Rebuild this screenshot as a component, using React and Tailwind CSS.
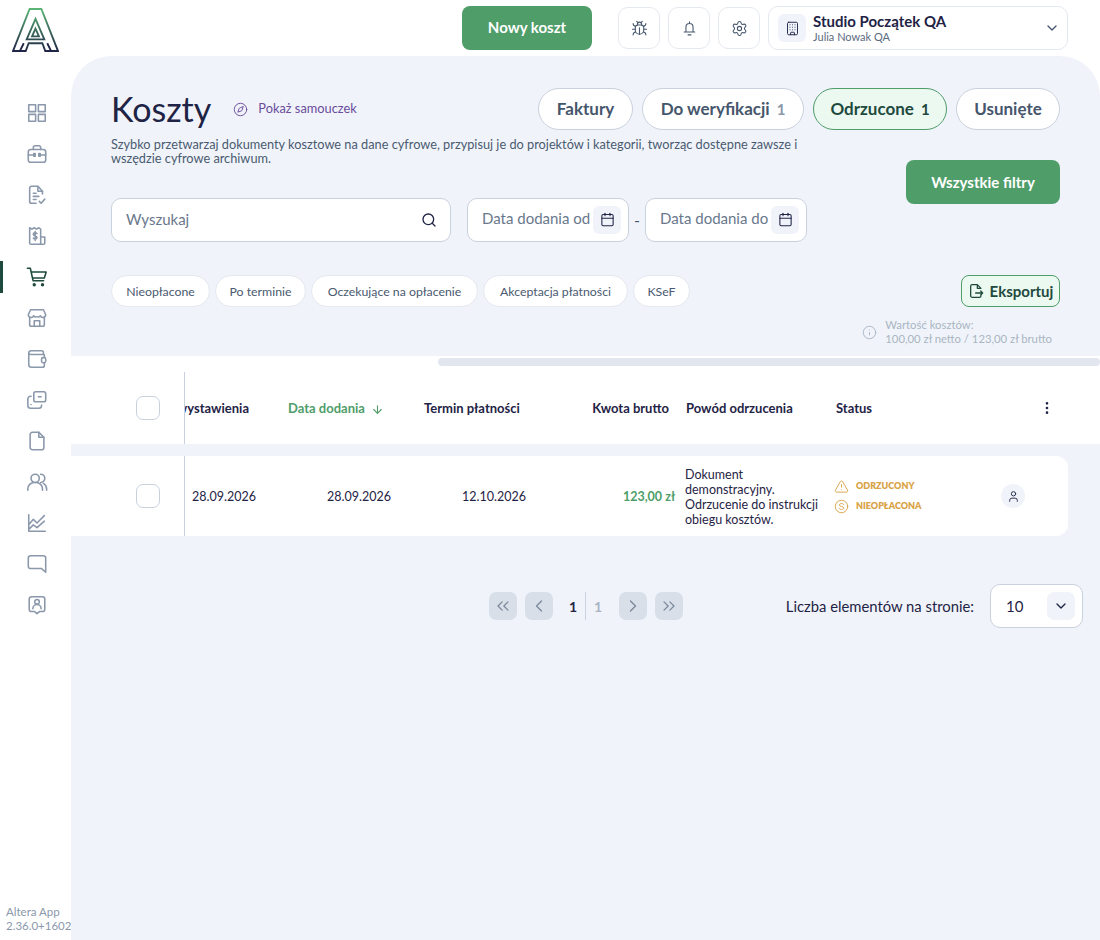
import React from 'react';
import {
  ArrowDown, Building, Bug, Calendar, ChevronDown, ChevronLeft, ChevronRight, ChevronsLeft, ChevronsRight,
  Compass, EllipsisVertical, Info, Search, Settings, TriangleAlert, User,
} from 'lucide-react';

const FONT = "font-['Lato','Noto_Sans',sans-serif]";

const Logo = () => (
  <svg width="47" height="45" viewBox="0 0 48 46" fill="none" strokeWidth="1.900" strokeLinejoin="miter">
    <defs>
      <linearGradient id="logoGrad" gradientUnits="userSpaceOnUse" x1="0" y1="0" x2="0" y2="45">
        <stop offset="0" stopColor="#5cb877" />
        <stop offset="1" stopColor="#1f2345" />
      </linearGradient>
    </defs>
    <path d="M18 1H30L47 44H34L31 36H17L14 44H1Z" stroke="url(#logoGrad)" />
    <path d="M24 11L33 32H15Z" stroke="url(#logoGrad)" />
    <path d="M24 21L27.500 29H20.500Z" stroke="url(#logoGrad)" />
    <path d="M8 44L12 36M40 44L36 36" stroke="#1f2345" />
  </svg>
);

const Glyph = ({ children, color = '#8b98ab' }) => (
  <svg width="22" height="22" viewBox="0 0 24 24" fill="none" stroke={color} strokeWidth="1.700" strokeLinecap="round" strokeLinejoin="round">
    {children}
  </svg>
);

const NAV_ICONS = [
  <Glyph key="dash">
    <path d="M3 3h7.500v7.500H3zM13.500 3H21v7.500h-7.500zM3 13.500h7.500V21H3zM13.500 13.500H21V21h-7.500z" />
  </Glyph>,
  <Glyph key="case">
    <rect x="2.500" y="7" width="19" height="14" rx="2.500" />
    <path d="M8 7V5a2 2 0 0 1 2-2h4a2 2 0 0 1 2 2v2M2.500 13h6M15.500 13h6M8.500 11.500h1.500v3H8.500zM14 11.500h1.500v3H14z" />
  </Glyph>,
  <Glyph key="doc">
    <path d="M18 11V8l-5-5.500H6a2 2 0 0 0-2 2V19a2 2 0 0 0 2 2h5" />
    <path d="M13 3v5h5M8 10h3M8 13.500h6M8 17h3M14.500 19l2 2 4-4.500" />
  </Glyph>,
  <Glyph key="receipt">
    <path d="M16 21H5.500a1.500 1.500 0 0 1-1.500-1.500V3l2.500 1.500L9 3l2.500 1.500L14 3l2 1.500V21zM16 13h4.500v6.500a1.500 1.500 0 0 1-1.500 1.500h-3" />
    <path d="M12 9.500c-.5-.8-1.200-1-2-1-1.100 0-2 .6-2 1.600 0 2.400 4 1.200 4 3.600 0 1-.9 1.600-2 1.600-.8 0-1.600-.3-2-1M10 7v10" />
  </Glyph>,
  <Glyph key="cart" color="#1e4a3d">
    <path d="M1.500 2.500h3.200l3 13.500h11.500M5.500 6.500H22l-2 6.500H7" />
    <circle cx="9" cy="20.500" r="1" fill="#1e4a3d" />
    <circle cx="18" cy="20.500" r="1" fill="#1e4a3d" />
  </Glyph>,
  <Glyph key="store">
    <path d="M4 11v8a2 2 0 0 0 2 2h12a2 2 0 0 0 2-2v-8M9 21v-6h6v6" />
    <path d="M5 3h14l2.500 5.500a3 3 0 0 1-5.800 1 3 3 0 0 1-3.700 1 3 3 0 0 1-3.700-1 3 3 0 0 1-5.800-1z" />
  </Glyph>,
  <Glyph key="wallet">
    <path d="M19 7H5.500A2.500 2.500 0 0 1 3 5.500 2.500 2.500 0 0 1 5.500 3H17a2 2 0 0 1 2 2zM3 5.500V18a3 3 0 0 0 3 3h12a2 2 0 0 0 2-2v-2.500M20 7.500V10" />
    <rect x="17" y="10.500" width="4.500" height="5.500" rx="1.500" />
  </Glyph>,
  <Glyph key="cash">
    <rect x="8.500" y="3" width="13" height="11" rx="2" />
    <path d="M13.500 8.500h3M5.500 8H5a3 3 0 0 0-3 3v7a3 3 0 0 0 3 3h9a3 3 0 0 0 3-3v-.5M5.500 17h.01" />
  </Glyph>,
  <Glyph key="file">
    <path d="M14 2.500H7a2.500 2.500 0 0 0-2.500 2.500v14A2.500 2.500 0 0 0 7 21.500h10a2.500 2.500 0 0 0 2.500-2.500V8z" />
    <path d="M14 2.500V8h5.500" />
  </Glyph>,
  <Glyph key="people">
    <circle cx="10" cy="8" r="4.500" />
    <path d="M2 21v-1.500a7 7 0 0 1 7-7h2a7 7 0 0 1 7 7V21M16 3.500a4.500 4.500 0 0 1 0 9M19 13.500a7 7 0 0 1 3.500 6V21" />
  </Glyph>,
  <Glyph key="chart">
    <path d="M3 3v18h18M3 14l5-6 4 4 8-8M3 19l5-5 4 3 8-7" />
  </Glyph>,
  <Glyph key="chat">
    <path d="M5 3h14a2.500 2.500 0 0 1 2.500 2.500V21L17 17H5a2.500 2.500 0 0 1-2.500-2.500v-9A2.500 2.500 0 0 1 5 3z" />
  </Glyph>,
  <Glyph key="contact">
    <path d="M6 3h12a2.500 2.500 0 0 1 2.500 2.500v11A2.500 2.500 0 0 1 18 19h-3l-3 2.500L9 19H6a2.500 2.500 0 0 1-2.500-2.500v-11A2.500 2.500 0 0 1 6 3z" />
    <circle cx="12" cy="8.500" r="2.500" />
    <path d="M7.500 16a4.500 4.500 0 0 1 9 0" />
  </Glyph>,
];

const Sidebar = () => (
  <aside className="w-[71px] h-full shrink-0 flex flex-col bg-white">
    <div className="pt-[8px] pl-[12px] h-[54px]">
      <Logo />
    </div>
    <nav className="mt-[48px] flex flex-col gap-[19px]">
      {NAV_ICONS.map((icon, i) => (
        <div key={i} className="relative h-[22px] flex justify-center pl-[3px]">
          {i === 4 && <span className="absolute left-0 top-[-5px] w-[3px] h-[32px] bg-[#1e4a3d]" />}
          {icon}
        </div>
      ))}
    </nav>
    <div className="mt-auto pb-[7px] pl-[6px] text-[11.500px] leading-[14px] text-[#8b98ab] whitespace-nowrap">
      Altera App<br />2.36.0+1602
    </div>
  </aside>
);

const BellIcon = ({ size, strokeWidth }) => (
  <svg width={size} height={size} viewBox="0 0 24 24" fill="none" stroke="currentColor" strokeWidth={strokeWidth} strokeLinecap="round" strokeLinejoin="round">
    <path d="M12 2.500v2M7 17v-7a5 5 0 0 1 10 0v7M4.500 17h15M10 21h4" />
  </svg>
);

const IconButton = ({ Icon }) => (
  <button type="button" className="w-[42px] h-[42px] rounded-[10px] border border-[#e4e8ef] bg-white flex items-center justify-center text-[#46566c]">
    <Icon size={17} strokeWidth={1.500} />
  </button>
);

const Header = () => (
  <header className="h-[56px] shrink-0 flex items-center justify-end pr-[32px] bg-white">
    <button type="button" className="w-[130px] h-[44px] pb-[2px] rounded-[8px] bg-[#4f9d69] text-white text-[15px] font-bold">Nowy koszt</button>
    <div className="ml-[26px] flex gap-[8px]">
      <IconButton Icon={Bug} />
      <IconButton Icon={BellIcon} />
      <IconButton Icon={Settings} />
    </div>
    <div className="ml-[8px] w-[300px] h-[44px] rounded-[10px] border border-[#e4e8ef] flex items-center pl-[9px] pr-[7px]">
      <div className="w-[28px] h-[28px] rounded-[6px] bg-[#f0f4fa] flex items-center justify-center text-[#1f2345]">
        <Building size={15} strokeWidth={1.500} />
      </div>
      <div className="ml-[7px] flex-1">
        <div className="text-[15px] leading-[18px] font-bold text-[#1f2345]">Studio Początek QA</div>
        <div className="text-[11px] leading-[14px] text-[#5b6b80]">Julia Nowak QA</div>
      </div>
      <ChevronDown size={16} className="text-[#46566c]" />
    </div>
  </header>
);

const Tab = ({ label, count, active, width }) => (
  <button
    type="button"
    className={`${width} h-[42px] rounded-full border flex items-center justify-center gap-[7px] text-[17px] font-bold ${active ? 'bg-[#ecf9f1] border-[#4f9d69] text-[#1e4a3d]' : 'bg-white border-[#c9d1dc] text-[#46566c]'}`}
  >
    {label}
    {count && <span className={active ? 'text-[#1e4a3d] text-[15px]' : 'text-[#8b98ab] text-[15px]'}>{count}</span>}
  </button>
);

const DateField = ({ label }) => (
  <div className="w-[162px] h-[44px] pb-[1px] rounded-[10px] border border-[#c9d1dc] bg-white flex items-center justify-between pl-[14px] pr-[7px]">
    <span className="text-[15px] text-[#6a788c] whitespace-nowrap pb-[2px]">{label}</span>
    <span className="w-[28px] h-[28px] rounded-[6px] bg-[#f0f4fa] flex items-center justify-center text-[#1f2345]">
      <Calendar size={15} strokeWidth={1.700} />
    </span>
  </div>
);

const CHIPS = [
  { label: 'Nieopłacone', width: 'w-[99px]' },
  { label: 'Po terminie', width: 'w-[91px]' },
  { label: 'Oczekujące na opłacenie', width: 'w-[167px]' },
  { label: 'Akceptacja płatności', width: 'w-[145px]' },
  { label: 'KSeF', width: 'w-[57px]' },
];

const Toolbar = () => (
  <section className="pl-[40px] pr-[40px] pt-[32px]">
    <div className="flex items-start justify-between">
      <div className="flex items-center h-[42px]">
        <h1 className="text-[34px] leading-[42px] text-[#1f2345]">Koszty</h1>
        <span className="ml-[22px] flex items-center gap-[10px] text-[12.800px] text-[#6a4c9c]">
          <Compass size={15} strokeWidth={1.500} />
          Pokaż samouczek
        </span>
      </div>
      <div className="flex gap-[9px]">
        <Tab label="Faktury" width="w-[95px]" />
        <Tab label="Do weryfikacji" count="1" width="w-[162px]" />
        <Tab label="Odrzucone" count="1" width="w-[134px]" active />
        <Tab label="Usunięte" width="w-[104px]" />
      </div>
    </div>
    <div className="flex items-start justify-between">
      <p className="mt-[7px] w-[700px] text-[12.750px] leading-[14px] text-[#4a5a70]">
        Szybko przetwarzaj dokumenty kosztowe na dane cyfrowe, przypisuj je do projektów i kategorii, tworząc dostępne zawsze i wszędzie cyfrowe archiwum.
      </p>
      <button type="button" className="mt-[30px] w-[154px] h-[44px] rounded-[8px] bg-[#4f9d69] text-white text-[15px] font-bold">Wszystkie filtry</button>
    </div>
    <div className="mt-[-6px] flex items-center">
      <div className="w-[340px] h-[44px] rounded-[10px] border border-[#c9d1dc] bg-white flex items-center justify-between pl-[14px] pr-[13px]">
        <span className="text-[15px] text-[#6a788c] pb-[2px]">Wyszukaj</span>
        <Search size={16} className="text-[#1f2345]" />
      </div>
      <div className="ml-[16px]"><DateField label="Data dodania od" /></div>
      <span className="w-[16px] text-center text-[#46566c]">-</span>
      <DateField label="Data dodania do" />
    </div>
    <div className="mt-[33px] flex items-center">
      <div className="flex gap-[5px]">
        {CHIPS.map(({ label, width }) => (
          <span key={label} className={`${width} h-[32px] pt-[2px] rounded-full border border-[#e4e8ef] bg-white flex items-center justify-center text-[12.300px] text-[#4a5a70] whitespace-nowrap`}>{label}</span>
        ))}
      </div>
      <button type="button" className="ml-auto w-[99px] h-[32px] rounded-[8px] border border-[#4f9d69] bg-[#ecf9f1] flex items-center justify-center gap-[6px] text-[15px] font-bold text-[#1e4a3d]">
        <svg width="16" height="16" viewBox="0 0 24 24" fill="none" stroke="currentColor" strokeWidth="1.900" strokeLinecap="round" strokeLinejoin="round">
          <path d="M14 2.500H6.500A2.500 2.500 0 0 0 4 5v14a2.500 2.500 0 0 0 2.500 2.500H17a2.500 2.500 0 0 0 2.500-2.500M14 2.500V8h5.500L14 2.500M11.500 15H22M19 12l3 3-3 3" />
        </svg>
        Eksportuj
      </button>
    </div>
    <div className="mt-[11px] flex justify-end pr-[8px] items-center gap-[8px] text-[11.300px] leading-[14px] text-[#aab4c3]">
      <Info size={15} strokeWidth={1.500} />
      <div>Wartość kosztów:<br />100,00 zł netto / 123,00 zł brutto</div>
    </div>
  </section>
);

const Checkbox = () => <span className="block w-[24px] h-[24px] rounded-[7px] border border-[#c9d1dc] bg-white" />;

const CostTable = () => (
  <section className="mt-[10px]">
    {/* nagłówek tabeli */}
    <div className="bg-white h-[88px]">
      <div className="h-[16px] pt-[2px]">
        <div className="ml-[367px] h-[8px] rounded-full bg-[#e2e7ef]" />
      </div>
      <div className="h-[72px] flex items-center text-[13px] font-bold text-[#1f2345] whitespace-nowrap">
        <div className="w-[114px] h-full flex items-center pl-[65px] border-r border-[#c9d1dc] shrink-0"><Checkbox /></div>
        <div className="w-[64px] pt-[2px] overflow-hidden flex justify-end shrink-0">Data wystawienia</div>
        <div className="ml-[39px] w-[136px] pt-[2px] flex items-center gap-[6px] text-[#4f9d69] shrink-0">
          Data dodania <ArrowDown size={13} />
        </div>
        <div className="w-[100px] pt-[2px] shrink-0">Termin płatności</div>
        <div className="w-[145px] pt-[2px] text-right shrink-0">Kwota brutto</div>
        <div className="ml-[17px] w-[150px] pt-[2px] shrink-0">Powód odrzucenia</div>
        <div className="w-[200px] pt-[2px] shrink-0">Status</div>
        <EllipsisVertical size={16} className="ml-[3px] shrink-0" />
      </div>
    </div>
    {/* wiersz dokumentu */}
    <div className="mt-[12px] h-[80px] mr-[32px] bg-white rounded-r-[12px] flex items-center text-[12.500px] text-[#1f2345]">
      <div className="w-[114px] h-full flex items-center pl-[65px] border-r border-[#c9d1dc] shrink-0"><Checkbox /></div>
      <div className="ml-[7px] w-[135px] pt-[2px] shrink-0">28.09.2026</div>
      <div className="w-[135px] pt-[2px] shrink-0">28.09.2026</div>
      <div className="w-[100px] pt-[2px] shrink-0">12.10.2026</div>
      <div className="w-[113px] pt-[2px] text-right font-bold text-[#4f9d69] shrink-0">123,00 zł</div>
      <div className="ml-[10px] w-[149px] pt-[2px] leading-[15px] shrink-0">Dokument demonstracyjny. Odrzucenie do instrukcji obiegu kosztów.</div>
      <div className="w-[167px] flex flex-col gap-[5px] text-[9px] font-extrabold text-[#d9a347] shrink-0">
        <span className="flex items-center gap-[7px]"><TriangleAlert size={15} strokeWidth={1.500} />ODRZUCONY</span>
        <span className="flex items-center gap-[7px]">
          <svg width="15" height="15" viewBox="0 0 24 24" fill="none" stroke="currentColor" strokeWidth="1.500" strokeLinecap="round">
            <circle cx="12" cy="12" r="10" />
            <path d="M15.500 9c-.6-1.100-1.900-1.800-3.500-1.800-1.900 0-3.400 1-3.400 2.400 0 3.200 7 1.600 7 4.800 0 1.400-1.600 2.400-3.600 2.400-1.600 0-3-.7-3.600-1.800" />
          </svg>
          NIEOPŁACONA
        </span>
      </div>
      <span className="w-[24px] h-[24px] rounded-full bg-[#f0f4fa] flex items-center justify-center text-[#1f2345]"><User size={13} strokeWidth={1.700} /></span>
    </div>
  </section>
);

const PageButton = ({ Icon }) => (
  <span className="w-[28px] h-[28px] rounded-[7px] bg-[#d8dfe9] flex items-center justify-center text-[#7a8899]">
    <Icon size={20} strokeWidth={1.500} />
  </span>
);

const Pagination = () => (
  <div className="mt-[48px] flex items-center pl-[418px] pr-[17px]">
    <div className="flex gap-[8px]">
      <PageButton Icon={ChevronsLeft} />
      <PageButton Icon={ChevronLeft} />
    </div>
    <span className="ml-[16px] w-[8px] text-[14px] font-bold text-[#1f2345]">1</span>
    <span className="ml-[8px] h-[28px] border-l border-[#c9d1dc]" />
    <span className="ml-[8px] w-[8px] text-[14px] font-bold text-[#aab4c3]">1</span>
    <div className="ml-[17px] flex gap-[8px]">
      <PageButton Icon={ChevronRight} />
      <PageButton Icon={ChevronsRight} />
    </div>
    <span className="ml-auto text-[14.800px] text-[#1f2345]">Liczba elementów na stronie:</span>
    <div className="ml-[16px] w-[93px] h-[44px] rounded-[10px] border border-[#c9d1dc] bg-white flex items-center justify-between pl-[15px] pr-[7px]">
      <span className="text-[15px] text-[#1f2345]">10</span>
      <span className="w-[28px] h-[28px] rounded-[7px] bg-[#f0f4fa] flex items-center justify-center text-[#1f2345]"><ChevronDown size={16} /></span>
    </div>
  </div>
);

const App = () => (
  <div className={`${FONT} w-[1100px] h-[940px] overflow-hidden flex bg-white`}>
    <Sidebar />
    <div className="flex-1 min-w-0 flex flex-col">
      <Header />
      <main className="flex-1 rounded-t-[40px] bg-[#f0f4fa] overflow-hidden">
        <Toolbar />
        <CostTable />
        <Pagination />
      </main>
    </div>
  </div>
);

export default App;
